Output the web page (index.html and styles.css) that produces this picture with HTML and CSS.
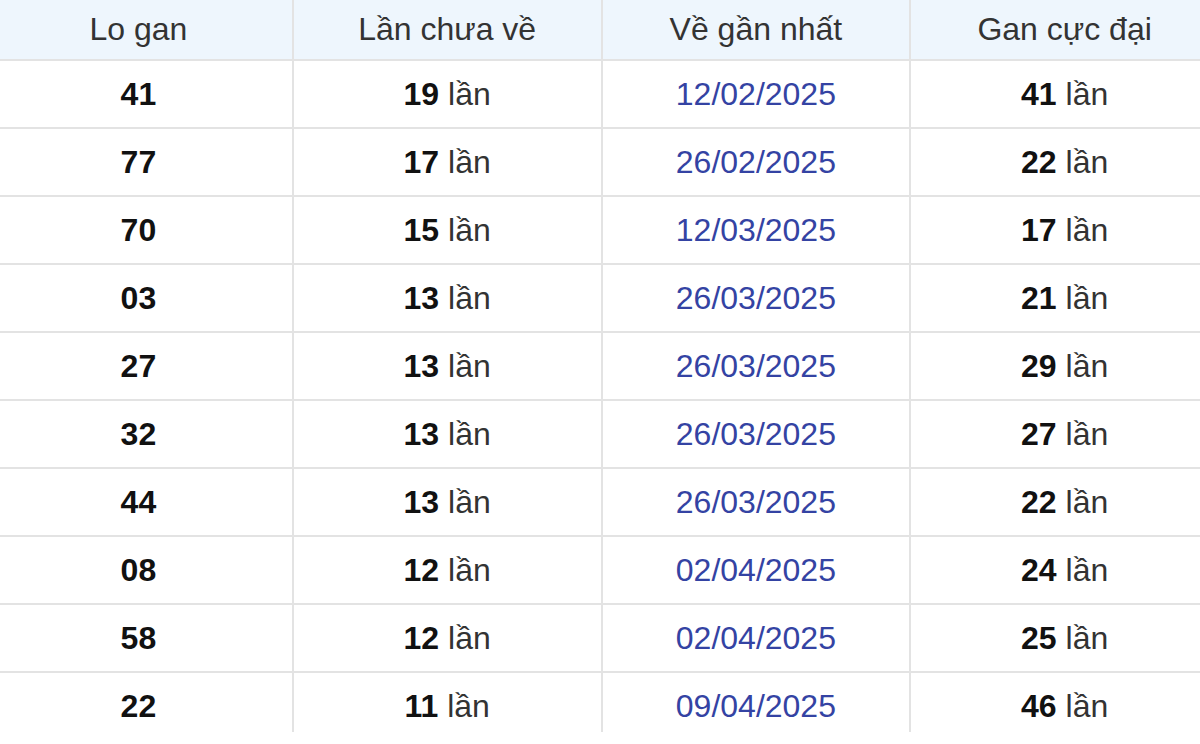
FILE: index.html
```html
<!DOCTYPE html>
<html lang="vi">
<head>
<meta charset="utf-8">
<title>Lo gan</title>
<link rel="stylesheet" href="styles.css">
</head>
<body>
<div class="frame">
  <table class="gan">
    <thead>
      <tr><th>Lo gan</th><th>Lần chưa về</th><th>Về gần nhất</th><th>Gan cực đại</th></tr>
    </thead>
    <tbody>
      <tr><td><b>41</b></td><td><b>19</b> lần</td><td class="date">12/02/2025</td><td><b>41</b> lần</td></tr>
      <tr><td><b>77</b></td><td><b>17</b> lần</td><td class="date">26/02/2025</td><td><b>22</b> lần</td></tr>
      <tr><td><b>70</b></td><td><b>15</b> lần</td><td class="date">12/03/2025</td><td><b>17</b> lần</td></tr>
      <tr><td><b>03</b></td><td><b>13</b> lần</td><td class="date">26/03/2025</td><td><b>21</b> lần</td></tr>
      <tr><td><b>27</b></td><td><b>13</b> lần</td><td class="date">26/03/2025</td><td><b>29</b> lần</td></tr>
      <tr><td><b>32</b></td><td><b>13</b> lần</td><td class="date">26/03/2025</td><td><b>27</b> lần</td></tr>
      <tr><td><b>44</b></td><td><b>13</b> lần</td><td class="date">26/03/2025</td><td><b>22</b> lần</td></tr>
      <tr><td><b>08</b></td><td><b>12</b> lần</td><td class="date">02/04/2025</td><td><b>24</b> lần</td></tr>
      <tr><td><b>58</b></td><td><b>12</b> lần</td><td class="date">02/04/2025</td><td><b>25</b> lần</td></tr>
      <tr><td><b>22</b></td><td><b>11</b> lần</td><td class="date">09/04/2025</td><td><b>46</b> lần</td></tr>
    </tbody>
  </table>
</div>
</body>
</html>
```
FILE: styles.css
```css
html, body {
  margin: 0;
  padding: 0;
  background: #fff;
}
.frame {
  width: 1200px;
  height: 732px;
  overflow: hidden;
}
.gan {
  margin-left: -15px;
  width: 1235px;
  table-layout: fixed;
  border-collapse: separate;
  border-spacing: 0;
  font-family: "Liberation Sans", Arial, sans-serif;
  font-size: 32px;
  color: #333;
}
.gan th, .gan td {
  padding: 0;
  text-align: center;
  vertical-align: middle;
  border-right: 2px solid #e3e3e3;
  border-bottom: 2px solid #e3e3e3;
}
.gan th {
  height: 59px;
  background: #eef6fd;
  font-weight: normal;
  color: #333;
}
.gan td {
  height: 66px;
}
.gan b {
  color: #111;
  font-weight: bold;
}
.gan td.date {
  color: #3443a3;
}
```
